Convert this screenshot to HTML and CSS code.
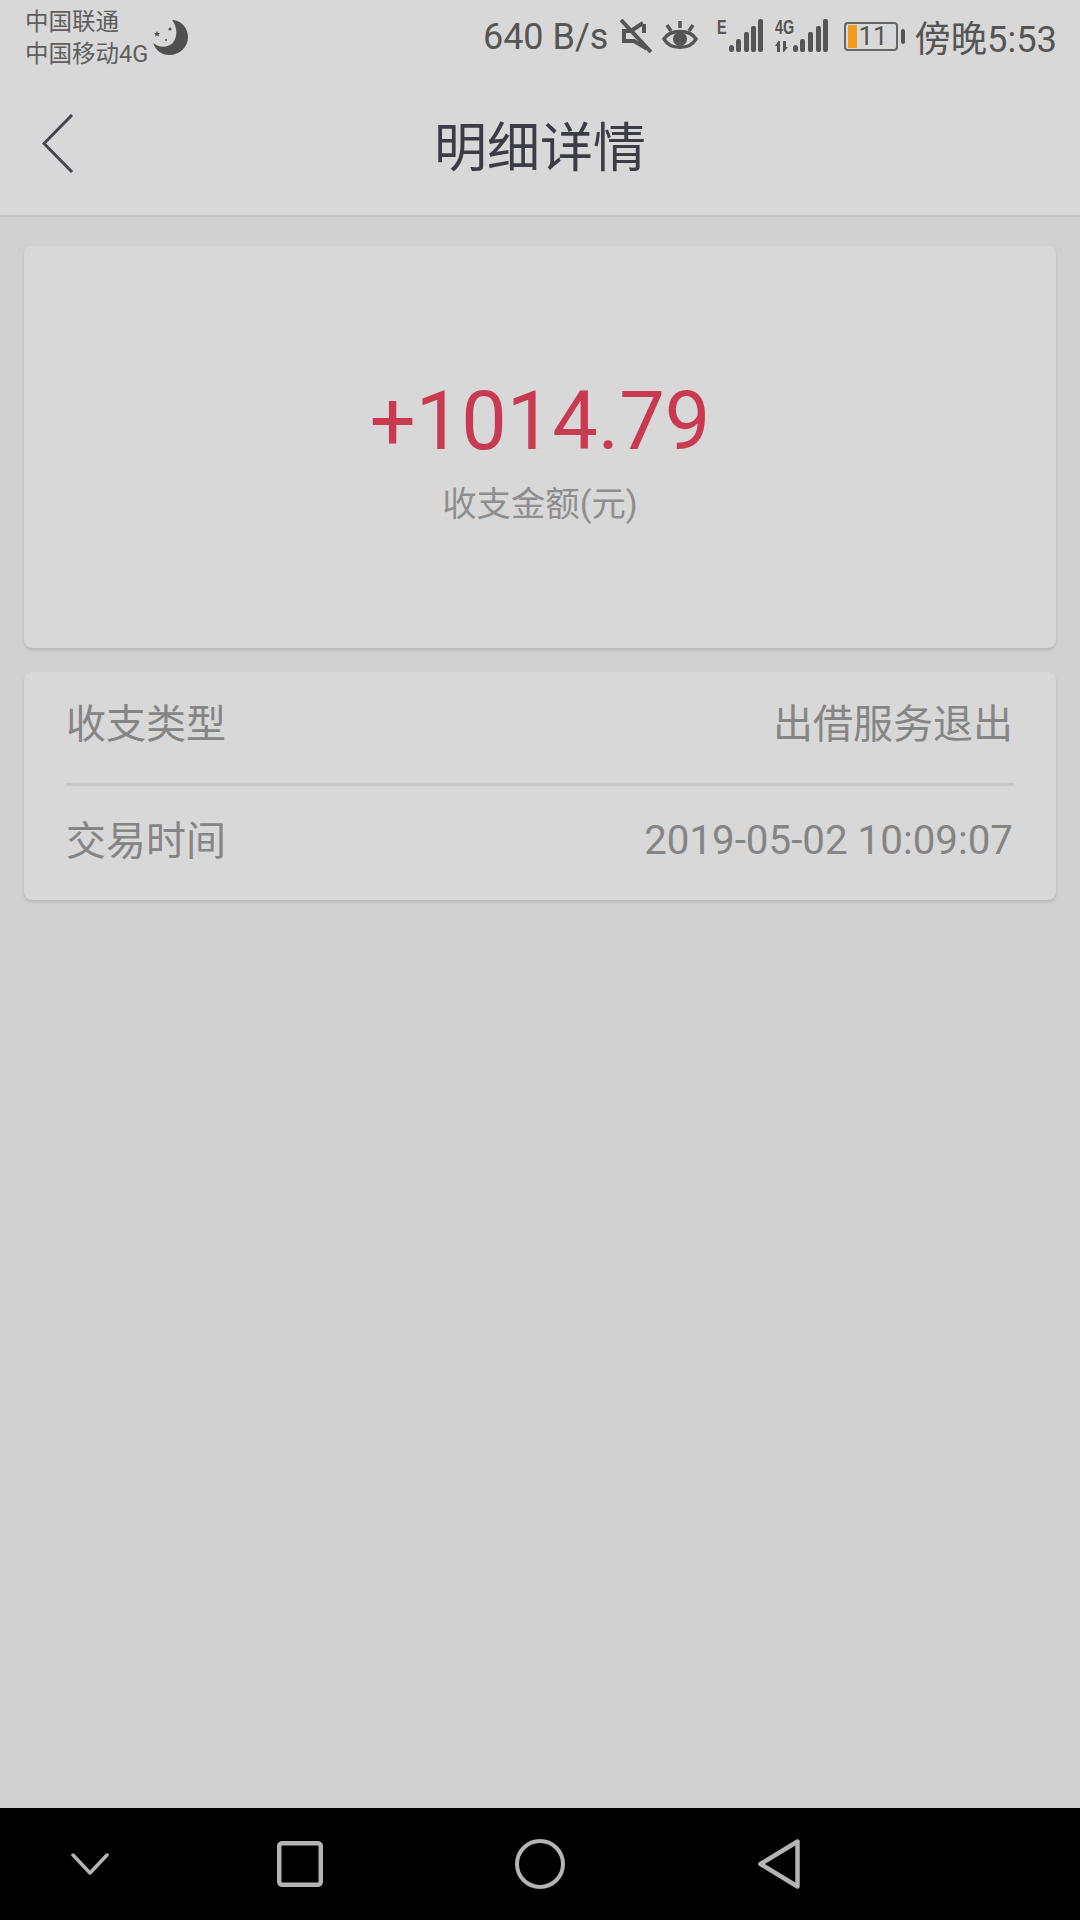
FILE: index.html
```html
<html>
<head>
    <meta charset="utf-8">
    <link rel="stylesheet" href="styles.css">
</head>
<body>
    <div class="phone">
        <div class="top-area">
            <div class="status-bar">
                <div class="carriers">
                    <div>中国联通</div>
                    <div>中国移动4G</div>
                </div>
                <svg class="moon" width="36" height="36" viewBox="0 0 36 36">
                    <path d="M19 1C27 1 35 8 35 18C35 28 27 36 16 36C9 36 3 32 0 24C5 28 11 29 17 26C24 22 26 10 19 1Z" fill="#4f4f4f"/>
                    <path d="M4 12l1 2 2 0-1.500 1.500 .5 2-2-1-2 1 .5-2L1 14l2 0z" fill="#4f4f4f"/>
                    <circle cx="17" cy="10" r="1.500" fill="#4f4f4f"/>
                    <circle cx="13" cy="21" r="1" fill="#4f4f4f"/>
                </svg>
                <div class="status-right">
                    <span class="speed">640 B/s</span>
                    <svg class="mute" width="32" height="34" viewBox="0 0 32 34" fill="none" stroke="#555" stroke-width="4">
                        <path d="M24 5V14M24 26V28L14 22H4V12H11L23 4"/>
                        <path d="M1 1L31 33"/>
                    </svg>
                    <svg class="eye" width="36" height="32" viewBox="0 0 36 32" fill="none" stroke="#555" stroke-width="3.500">
                        <path d="M2 19C8 9 28 9 34 19C28 30 8 30 2 19Z"/>
                        <circle cx="18" cy="19" r="7" fill="#555" stroke="none"/>
                        <path d="M5 5L9 11M18 1V8M31 5L27 11"/>
                    </svg>
                    <div class="signal signal-e">
                        <span class="net-tag">E</span>
                        <svg width="34" height="34" viewBox="0 0 34 34" fill="#555">
                            <rect x="0" y="26" width="5" height="7" rx="2.500"/>
                            <rect x="7" y="20" width="5" height="13" rx="2"/>
                            <rect x="15" y="13" width="5" height="20" rx="2"/>
                            <rect x="22" y="7" width="5" height="26" rx="2"/>
                            <rect x="29" y="0" width="5" height="33" rx="2"/>
                        </svg>
                    </div>
                    <div class="signal signal-4g">
                        <span class="net-tag">4G</span>
                        <svg width="54" height="34" viewBox="0 0 54 34" fill="#555">
                            <path d="M3.500 22L0 27H2V33H5V22ZM9 33L13 28H11V22H8V33Z"/>
                            <rect x="18" y="26" width="5" height="7" rx="2.500"/>
                            <rect x="25" y="20" width="5" height="13" rx="2"/>
                            <rect x="33" y="13" width="5" height="20" rx="2"/>
                            <rect x="41" y="7" width="5" height="26" rx="2"/>
                            <rect x="48" y="0" width="5" height="33" rx="2"/>
                        </svg>
                    </div>
                    <div class="battery">
                        <div class="battery-body">
                            <span class="battery-level"></span>
                            <span class="battery-num">11</span>
                        </div>
                        <span class="battery-tip"></span>
                    </div>
                    <span class="clock">傍晚5:53</span>
                </div>
            </div>
            <div class="title-bar">
                <svg class="back" width="32" height="60" viewBox="0 0 32 60" fill="none" stroke="#45454f" stroke-width="3">
                    <path d="M30 1L2 29.500L30 58"/>
                </svg>
                <h1>明细详情</h1>
            </div>
        </div>

        <div class="content">
            <div class="card amount-card">
                <div class="amount">+1014.79</div>
                <div class="amount-label">收支金额(元)</div>
            </div>
            <div class="card info-card">
                <div class="info-row info-row-type">
                    <span>收支类型</span>
                    <span>出借服务退出</span>
                </div>
                <div class="info-row info-row-time">
                    <span>交易时间</span>
                    <span class="info-date">2019-05-02 10:09:07</span>
                </div>
            </div>
        </div>

        <div class="nav-bar">
            <svg class="nav-down" width="38" height="22" viewBox="0 0 38 22" fill="none" stroke="#b4b4b4" stroke-width="3.500" stroke-linecap="round" stroke-linejoin="round">
                <path d="M2 2L19 20L36 2"/>
            </svg>
            <svg class="nav-square" width="46" height="46" viewBox="0 0 46 46" fill="none" stroke="#b4b4b4" stroke-width="4.500">
                <rect x="2.200" y="2.200" width="41.600" height="41.600" rx="3"/>
            </svg>
            <svg class="nav-circle" width="50" height="50" viewBox="0 0 50 50" fill="none" stroke="#b4b4b4" stroke-width="4">
                <circle cx="25" cy="25" r="23"/>
            </svg>
            <svg class="nav-back" width="42" height="50" viewBox="0 0 42 50" fill="none" stroke="#b4b4b4" stroke-width="4.500" stroke-linejoin="round">
                <path d="M39.500 2.500V47.500L2.500 25Z"/>
            </svg>
        </div>
    </div>
</body>
</html>
```

FILE: styles.css
```css
html, body {
    margin: 0;
    padding: 0;
}
body {
    background-color: #d0d0d0;
    font-family: Roboto, 'Noto Sans CJK SC', sans-serif;
}
.phone {
    width: 1080px;
    height: 1920px;
    display: flex;
    flex-direction: column;
    overflow: hidden;
}

/* status bar + title */
.top-area {
    height: 215px;
    background-color: #d8d8d8;
    border-bottom: 2px solid #c4c4c4;
    box-sizing: content-box;
}
.status-bar {
    height: 72px;
    display: flex;
    align-items: center;
    padding: 0 23px 0 25px;
    color: #555;
}
.carriers {
    font-size: 23.5px;
    line-height: 32px;
    color: #5e5e5e;
    margin-top: 4px;
}
.moon {
    margin: 2px 0 0 5px;
}
.status-right {
    margin-left: auto;
    display: flex;
    align-items: center;
}
.speed {
    font-size: 36px;
    margin: 2px 12px 0 0;
}
.mute {
    margin-right: 10px;
}
.eye {
    margin-right: 19px;
    margin-top: -1px;
}
.signal {
    display: flex;
    align-items: flex-start;
    position: relative;
}
.signal-e {
    margin-right: 12px;
    padding-left: 12px;
}
.signal-4g {
    margin-right: 15px;
}
.net-tag {
    position: absolute;
    left: 0;
    top: -2px;
    font-size: 20px;
    font-weight: 700;
    line-height: 20px;
    color: #555;
    font-family: 'Liberation Sans', sans-serif;
    transform: scaleX(0.72);
    transform-origin: left top;
}
.battery {
    display: flex;
    align-items: center;
    margin-right: 9px;
}
.battery-body {
    width: 54px;
    height: 29px;
    box-sizing: border-box;
    border: 2px solid #666;
    border-radius: 4px;
    display: flex;
    align-items: center;
    padding-left: 2px;
    color: #555;
}
.battery-level {
    width: 9px;
    height: 23px;
    background-color: #f39c1f;
}
.battery-num {
    font-size: 26px;
    margin-left: 1px;
}
.battery-tip {
    width: 4px;
    height: 15px;
    background-color: #555;
    border-radius: 2px;
    margin-left: 3px;
}
.clock {
    font-size: 36.3px;
}

.title-bar {
    height: 143px;
    display: flex;
    align-items: center;
    justify-content: center;
    position: relative;
}
.back {
    position: absolute;
    left: 42px;
    top: 42px;
}
.title-bar h1 {
    margin: 0;
    font-size: 53px;
    font-weight: 400;
    color: #3c3c46;
}

/* cards */
.content {
    flex: 1;
    padding: 29px 24px 0;
}
.card {
    background-color: #d8d8d8;
    border-radius: 8px;
    box-shadow: 0 2px 3px rgba(0, 0, 0, 0.12);
}
.amount-card {
    height: 402px;
    display: flex;
    flex-direction: column;
    align-items: center;
    margin-bottom: 24px;
}
.amount {
    font-size: 81px;
    line-height: 94px;
    color: #c93a50;
    margin-top: 129px;
}
.amount-label {
    font-size: 34.4px;
    line-height: 50px;
    color: #8e8e8e;
    margin-top: 10px;
}
.info-card {
    height: 228px;
    padding: 0 42px;
}
.info-row {
    box-sizing: border-box;
    display: flex;
    align-items: center;
    justify-content: space-between;
    padding-right: 1px;
    font-size: 40px;
    color: #858585;
}
.info-row-type {
    height: 114px;
    padding-bottom: 13px;
    border-bottom: 3px solid #c8c8c8;
}
.info-row-time {
    height: 112px;
    padding-bottom: 8px;
}
.info-date {
    font-size: 40.3px;
    margin-top: 5px;
}

/* bottom nav */
.nav-bar {
    height: 112px;
    background-color: #000;
    display: flex;
    align-items: center;
    padding-left: 71px;
}
.nav-down {
    margin-right: 168px;
}
.nav-square {
    margin-right: 192px;
}
.nav-circle {
    margin-right: 193px;
}
```
